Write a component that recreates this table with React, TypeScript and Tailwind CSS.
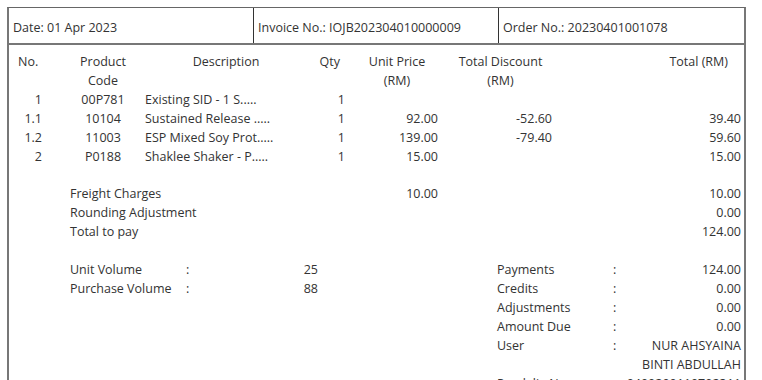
const items = [
  { no: '1', code: '00P781', desc: 'Existing SID - 1 S.....', qty: '1', price: '', disc: '', total: '' },
  { no: '1.1', code: '10104', desc: 'Sustained Release .....', qty: '1', price: '92.00', disc: '-52.60', total: '39.40' },
  { no: '1.2', code: '11003', desc: 'ESP Mixed Soy Prot.....', qty: '1', price: '139.00', disc: '-79.40', total: '59.60' },
  { no: '2', code: 'P0188', desc: 'Shaklee Shaker - P.....', qty: '1', price: '15.00', disc: '', total: '15.00' },
];

const cols = 'grid grid-cols-[53px_82px_164px_38px_102px_105px_1fr]';

const SumRow = ({ label, value }: { label: string; value: React.ReactNode }) => (
  <div className="grid grid-cols-[116px_1fr]">
    <div>{label}</div>
    <div className="flex">
      <span className="w-[12px]">:</span>
      <span className="flex-1 text-right pr-[3px]">{value}</span>
    </div>
  </div>
);

export default function App() {
  return (
    <div
      className="bg-white min-h-[380px] pt-[7px] pl-[7px] text-[12.5px] leading-[19px] text-[#333]"
      style={{ fontFamily: '"Open Sans", "Noto Sans", sans-serif' }}
    >
      <div className="w-[739px] border-t border-t-[#666] border-x-2 border-x-[#777] min-h-[380px]">
        {/* header strip */}
        <div className="flex h-[37px] border-b-2 border-b-[#777]">
          <div className="w-[245px] flex items-center pl-[4px] pt-[3px] border-r border-r-[#333]">Date: 01 Apr 2023</div>
          <div className="w-[245px] flex items-center pl-[4px] pt-[3px] border-r border-r-[#333]">Invoice No.: IOJB202304010000009</div>
          <div className="flex-1 flex items-center pl-[4px] pt-[3px]">Order No.: 20230401001078</div>
        </div>

        {/* table head */}
        <div className={`${cols} pt-[7px]`}>
          <div className="pl-[9px]">No.</div>
          <div className="text-center">
            Product
            <br />
            Code
          </div>
          <div className="text-center">Description</div>
          <div className="text-right pr-[6px]">Qty</div>
          <div className="text-center">
            Unit Price
            <br />
            (RM)
          </div>
          <div className="text-center">
            Total Discount
            <br />
            (RM)
          </div>
          <div className="text-right pr-[16px]">Total (RM)</div>
        </div>

        {/* items */}
        {items.map((it) => (
          <div key={it.no} className={cols}>
            <div className="text-right pr-[20px]">{it.no}</div>
            <div className="text-center">{it.code}</div>
            <div className="pl-[1px] whitespace-nowrap">{it.desc}</div>
            <div className="text-right pr-[1px]">{it.qty}</div>
            <div className="text-right pr-[10px]">{it.price}</div>
            <div className="text-right pr-[1px]">{it.disc}</div>
            <div className="text-right pr-[3px]">{it.total}</div>
          </div>
        ))}

        {/* charges */}
        <div className="mt-[18px]">
          <div className={cols}>
            <div className="col-span-4 pl-[61px]">Freight Charges</div>
            <div className="text-right pr-[10px]">10.00</div>
            <div />
            <div className="text-right pr-[3px]">10.00</div>
          </div>
          <div className={cols}>
            <div className="col-span-6 pl-[61px]">Rounding Adjustment</div>
            <div className="text-right pr-[3px]">0.00</div>
          </div>
          <div className={cols}>
            <div className="col-span-6 pl-[61px]">Total to pay</div>
            <div className="text-right pr-[3px]">124.00</div>
          </div>
        </div>

        {/* volumes & payments */}
        <div className="flex mt-[19px]">
          <div className="w-[488px] pl-[61px]">
            <div className="grid grid-cols-[116px_90px_42px]">
              <div>Unit Volume</div>
              <div>:</div>
              <div className="text-right">25</div>
            </div>
            <div className="grid grid-cols-[116px_90px_42px]">
              <div>Purchase Volume</div>
              <div>:</div>
              <div className="text-right">88</div>
            </div>
          </div>
          <div className="flex-1">
            <SumRow label="Payments" value="124.00" />
            <SumRow label="Credits" value="0.00" />
            <SumRow label="Adjustments" value="0.00" />
            <SumRow label="Amount Due" value="0.00" />
            <SumRow
              label="User"
              value={
                <>
                  NUR AHSYAINA
                  <br />
                  BINTI ABDULLAH
                </>
              }
            />
            <SumRow label="Pusdalia No" value="0400200110702311" />
          </div>
        </div>
      </div>
    </div>
  );
}
